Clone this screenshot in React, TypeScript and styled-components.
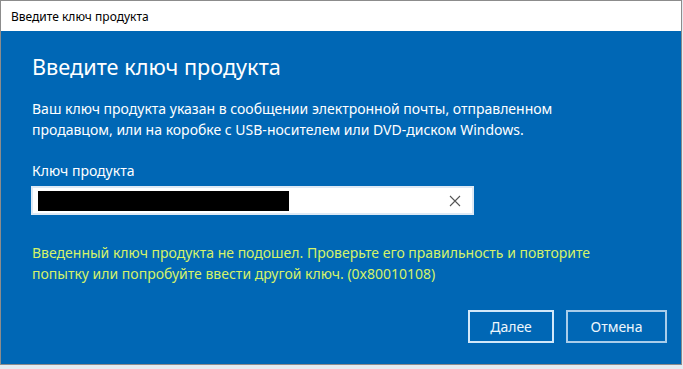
import React, { FC } from "react";
import styled, { createGlobalStyle } from "styled-components";

const GlobalStyle = createGlobalStyle`
  html, body {
    margin: 0;
    padding: 0;
    background: #e4ebf1;
  }
  body {
    font-family: "Noto Sans", "Open Sans", sans-serif;
  }
`;

const Window = styled.div`
  display: flex;
  flex-direction: column;
  box-sizing: border-box;
  width: 682px;
  height: 365px;
  border: 1px solid #8c8c8c;
  background: #ffffff;
`;

const TitleBar = styled.div`
  display: flex;
  align-items: center;
  height: 30px;
  padding-left: 10px;
  font-size: 12px;
  color: #000000;
  background: #ffffff;
`;

const Body = styled.div`
  flex: 1;
  display: flex;
  flex-direction: column;
  padding: 21px 31px 0 31px;
  background: #0067b5;
  color: #ffffff;
`;

const Heading = styled.h1`
  margin: 0;
  font-size: 21.7px;
  font-weight: 400;
  line-height: 29px;
`;

const Text = styled.p<{ $color?: string }>`
  margin: 0;
  font-size: 14px;
  line-height: 21px;
  color: ${p => p.$color || "#ffffff"};
`;

const Description = styled(Text)`
  margin-top: 17px;
`;

const Label = styled.label`
  display: block;
  margin-top: 21px;
  font-size: 14px;
  line-height: 20px;
`;

const KeyField = styled.div`
  display: flex;
  align-items: center;
  box-sizing: border-box;
  width: 443px;
  height: 29px;
  margin-top: 5px;
  margin-left: -1px;
  padding: 0 10px 0 5px;
  background: #ffffff;
  border: 2px solid #dde9f5;
`;

const Redacted = styled.div`
  width: 251px;
  height: 20px;
  background: #000000;
`;

const Spacer = styled.div`
  flex: 1;
`;

const ClearButton = styled.button`
  display: flex;
  align-items: center;
  justify-content: center;
  width: 14px;
  height: 14px;
  padding: 0;
  border: none;
  background: transparent;
`;

const ErrorText = styled(Text)`
  margin-top: 27px;
  font-size: 14px;
`;

const Footer = styled.div`
  display: flex;
  justify-content: flex-end;
  gap: 12px;
  margin-top: auto;
  margin-right: -17px;
  padding-bottom: 21px;
`;

const Button = styled.button<{ $primary?: boolean }>`
  box-sizing: border-box;
  width: ${p => (p.$primary ? "86px" : "101px")};
  height: 33px;
  border: 2px solid ${p => (p.$primary ? "#d2e8f9" : "#a9cdea")};
  background: #0067b5;
  color: #eef6fc;
  font-family: "Noto Sans", "Open Sans", sans-serif;
  font-size: 14px;
`;

const CloseX: FC = () => (
  <svg width="12" height="12" viewBox="0 0 12 12">
    <path d="M1 1 L11 11 M11 1 L1 11" stroke="#555" strokeWidth="1.1" />
  </svg>
);

const App: FC = () => (
  <>
    <GlobalStyle />
    <Window>
      <TitleBar>Введите ключ продукта</TitleBar>
      <Body>
        <Heading>Введите ключ продукта</Heading>
        <Description>
          Ваш ключ продукта указан в сообщении электронной почты, отправленном
          <br />
          продавцом, или на коробке с USB-носителем или DVD-диском Windows.
        </Description>
        <Label htmlFor="key">Ключ продукта</Label>
        <KeyField id="key">
          <Redacted />
          <Spacer />
          <ClearButton aria-label="Очистить">
            <CloseX />
          </ClearButton>
        </KeyField>
        <ErrorText $color="#d4f26a">
          Введенный ключ продукта не подошел. Проверьте его правильность и повторите
          <br />
          попытку или попробуйте ввести другой ключ. (0x80010108)
        </ErrorText>
        <Footer>
          <Button $primary>Далее</Button>
          <Button>Отмена</Button>
        </Footer>
      </Body>
    </Window>
  </>
);

export default App;
